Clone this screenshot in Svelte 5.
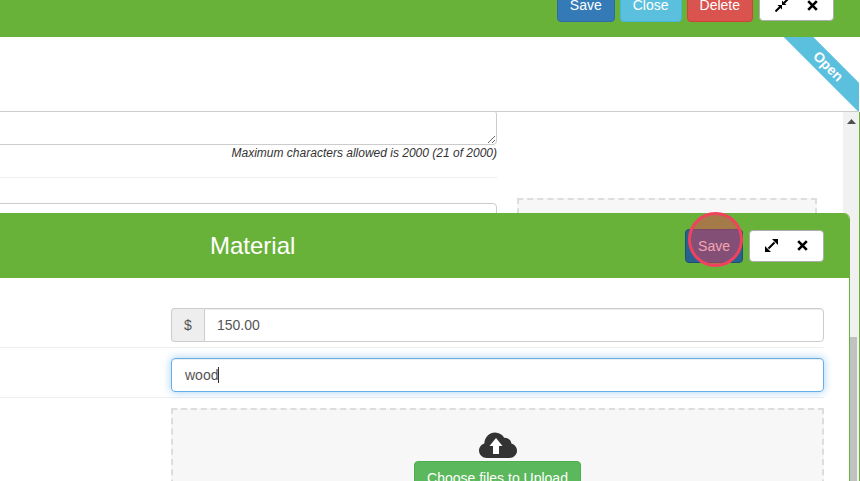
<script>
  // form rows shown in the material dialog
  const amount = "150.00";
  const description = "wood";
</script>

<div class="page">
  <div class="topbar">
    <button class="btn primary">Save</button>
    <button class="btn info">Close</button>
    <button class="btn danger">Delete</button>
    <div class="winbtns">
      <svg width="14" height="14" viewBox="0 0 14 14">
        <path d="M0.5 13.5L5 9M13.5 0.5L9 5" stroke="#000" stroke-width="2" fill="none" />
        <path d="M7 7H2.5L7 11.5ZM7 7V2.5L11.5 7Z" fill="#000" />
      </svg>
      <svg width="11" height="11" viewBox="0 0 11 11">
        <path d="M1.2 1.2L9.8 9.8M9.8 1.2L1.2 9.8" stroke="#000" stroke-width="2.6" fill="none" />
      </svg>
    </div>
  </div>

  <div class="panelhead">
    <div class="ribbon">Open</div>
  </div>

  <div class="scroller">
    <div class="content">
      <div class="maincol">
        <textarea class="notes"></textarea>
        <div class="hint">Maximum characters allowed is 2000 (21 of 2000)</div>
        <hr />
        <div class="oldinput"></div>
      </div>
      <div class="sidecol">
        <div class="oldupload"></div>
      </div>
    </div>
    <div class="scrollbar">
      <svg class="arrow" width="9" height="5" viewBox="0 0 9 5"><path d="M4.5 0L9 5H0Z" fill="#505050" /></svg>
      <div class="thumb"></div>
    </div>
  </div>

  <div class="modal">
    <div class="modalhead">
      <div class="title">Material</div>
      <button class="btn hovered modalsave">Save</button>
      <div class="winbtns">
        <svg width="13" height="13" viewBox="0 0 13 13">
          <path d="M3.5 9.5L9.5 3.5" stroke="#000" stroke-width="2" fill="none" />
          <path d="M0 13V7L6 13ZM13 0V6L7 0Z" fill="#000" />
        </svg>
        <svg width="11" height="11" viewBox="0 0 11 11">
          <path d="M1.2 1.2L9.8 9.8M9.8 1.2L1.2 9.8" stroke="#000" stroke-width="2.6" fill="none" />
        </svg>
      </div>
    </div>
    <div class="modalbody">
      <div class="row first">
        <div class="group">
          <span class="addon">$</span>
          <input class="amount" value={amount} />
        </div>
      </div>
      <div class="row">
        <div class="focused">{description}<span class="caret"></span></div>
      </div>
      <div class="dropzone">
        <svg class="cloud" width="38" height="26" viewBox="0 0 38 26">
          <path d="M8 26C3.5 26 0 22.6 0 18.5C0 15.2 2.2 12.4 5.3 11.4C5.6 5.2 10.6 0.5 16 0.5C20 0.5 23.4 2.6 25.2 5.8C29 5.4 32 8 32.4 11.6C35.6 12.6 38 15.4 38 18.8C38 22.8 34.6 26 30.4 26Z" fill="#333" />
          <path d="M17 6L23.5 14H20V22H14V14H10.5Z" fill="#fff" />
        </svg>
        <button class="btn success">Choose files to Upload</button>
      </div>
    </div>
  </div>

  <div class="clickmark"></div>
</div>

<style>
  :global(body) {
    margin: 0;
    font-family: "Liberation Sans", Arial, sans-serif;
    font-size: 14px;
    color: #555;
  }

  .page {
    position: relative;
    width: 860px;
    height: 481px;
    overflow: hidden;
    background: #fff;
  }

  .topbar {
    height: 37px;
    background: #69b23a;
    display: flex;
    justify-content: flex-end;
    align-items: flex-end;
    gap: 5px;
    padding: 0 26px 15px 0;
    box-sizing: border-box;
  }

  .btn {
    font: 14px "Liberation Sans", Arial, sans-serif;
    height: 34px;
    padding: 6px 12px;
    border: 1px solid transparent;
    border-radius: 4px;
    color: #fff;
    box-sizing: border-box;
    flex: none;
  }

  .primary { background: #337ab7; border-color: #2e6da4; }
  .hovered { background: #286090; border-color: #204d74; }
  .info { background: #5bc0de; border-color: #46b8da; }
  .danger { background: #d9534f; border-color: #d43f3a; }
  .success { background: #5cb85c; border-color: #4cae4c; }

  .winbtns {
    width: 75px;
    height: 32px;
    flex: none;
    margin-left: 1px;
    background: #fff;
    border: 1px solid #adadad;
    border-radius: 4px;
    box-sizing: border-box;
    display: flex;
    align-items: center;
    justify-content: space-between;
    padding: 0 15px;
  }

  .topbar .winbtns {
    margin-bottom: 1px;
  }

  .panelhead {
    position: relative;
    height: 75px;
    margin-right: 1px;
    border-bottom: 1px solid #ccc;
    box-sizing: border-box;
    overflow: hidden;
  }

  .ribbon {
    position: absolute;
    top: 19px;
    left: 768px;
    width: 120px;
    height: 21px;
    line-height: 21px;
    text-align: center;
    transform: rotate(45deg);
    background: #5bc0de;
    color: #fff;
    font-weight: bold;
  }

  .scroller {
    display: flex;
    height: 369px;
    border-right: 1px solid #69b23a;
    overflow: hidden;
  }

  .content {
    flex: 1;
    display: flex;
    min-width: 0;
  }

  .maincol {
    width: 497px;
    flex: none;
  }

  .notes {
    display: block;
    width: 517px;
    height: 35px;
    margin: -2px 0 0 -20px;
    border: 1px solid #ccc;
    border-radius: 4px;
    box-sizing: border-box;
    resize: both;
    background: #fff;
  }

  .hint {
    font-size: 12px;
    font-style: italic;
    color: #333;
    text-align: right;
    line-height: 17px;
  }

  hr {
    border: 0;
    border-top: 1px solid #eee;
    margin: 15px 0 25px;
  }

  .oldinput {
    height: 34px;
    margin-left: -20px;
    border: 1px solid #ccc;
    border-radius: 4px;
  }

  .sidecol {
    margin-left: 20px;
    padding-top: 86px;
  }

  .oldupload {
    width: 300px;
    height: 120px;
    box-sizing: border-box;
    background: #f7f7f7;
    border: 2px dashed #ddd;
  }

  .scrollbar {
    width: 16px;
    flex: none;
    background: #f1f1f1;
    display: flex;
    flex-direction: column;
    align-items: center;
  }

  .arrow {
    margin-top: 7px;
    flex: none;
  }

  .thumb {
    width: 14px;
    height: 160px;
    margin-top: 213px;
    margin-right: 2px;
    background: #c1c1c1;
    flex: none;
  }

  .modal {
    position: absolute;
    left: 0;
    top: 213px;
    width: 850px;
    bottom: 0;
    background: #fff;
    border-right: 1px solid #69b23a;
    border-top-right-radius: 6px;
    box-sizing: border-box;
    overflow: hidden;
  }

  .modalhead {
    height: 65px;
    background: #69b23a;
    display: flex;
    align-items: center;
    padding-right: 25px;
    box-sizing: border-box;
  }

  .title {
    font-size: 24px;
    color: #fff;
    margin-left: 210px;
    margin-right: auto;
  }

  .modalsave {
    margin-right: 5px;
  }

  .modalbody {
    padding: 0 25px 0 171px;
    position: relative;
  }

  .row {
    padding: 11px 0 5px;
    border-bottom: 1px solid #eee;
    margin-left: -171px;
    padding-left: 171px;
  }

  .row.first {
    padding-top: 30px;
    padding-bottom: 5px;
    margin-bottom: -1px;
  }

  .group {
    display: flex;
    height: 34px;
  }

  .addon {
    width: 33px;
    flex: none;
    box-sizing: border-box;
    display: flex;
    align-items: center;
    justify-content: center;
    background: #eee;
    border: 1px solid #ccc;
    border-right: 0;
    border-radius: 4px 0 0 4px;
  }

  .amount {
    flex: 1;
    min-width: 0;
    box-sizing: border-box;
    border: 1px solid #ccc;
    border-radius: 0 4px 4px 0;
    padding: 6px 12px;
    font: 14px "Liberation Sans", Arial, sans-serif;
    color: #555;
    box-shadow: inset 0 1px 1px rgba(0, 0, 0, 0.075);
  }

  .focused {
    height: 34px;
    line-height: 32px;
    box-sizing: border-box;
    padding: 0 13px;
    border: 1px solid #66afe9;
    border-radius: 4px;
    box-shadow: inset 0 1px 1px rgba(0, 0, 0, 0.075), 0 0 8px rgba(102, 175, 233, 0.6);
  }

  .caret {
    display: inline-block;
    width: 1px;
    height: 16px;
    background: #333;
    vertical-align: -3px;
  }

  .dropzone {
    margin-top: 10px;
    height: 200px;
    box-sizing: border-box;
    background: #f7f7f7;
    border: 2px dashed #ddd;
    display: flex;
    flex-direction: column;
    align-items: center;
    padding-top: 22px;
  }

  .cloud {
    flex: none;
    margin-bottom: 3px;
  }

  .clickmark {
    position: absolute;
    left: 688px;
    top: 212px;
    width: 55px;
    height: 55px;
    box-sizing: border-box;
    border: 3px solid #f0425f;
    border-radius: 50%;
    background: rgba(232, 60, 90, 0.48);
  }
</style>
